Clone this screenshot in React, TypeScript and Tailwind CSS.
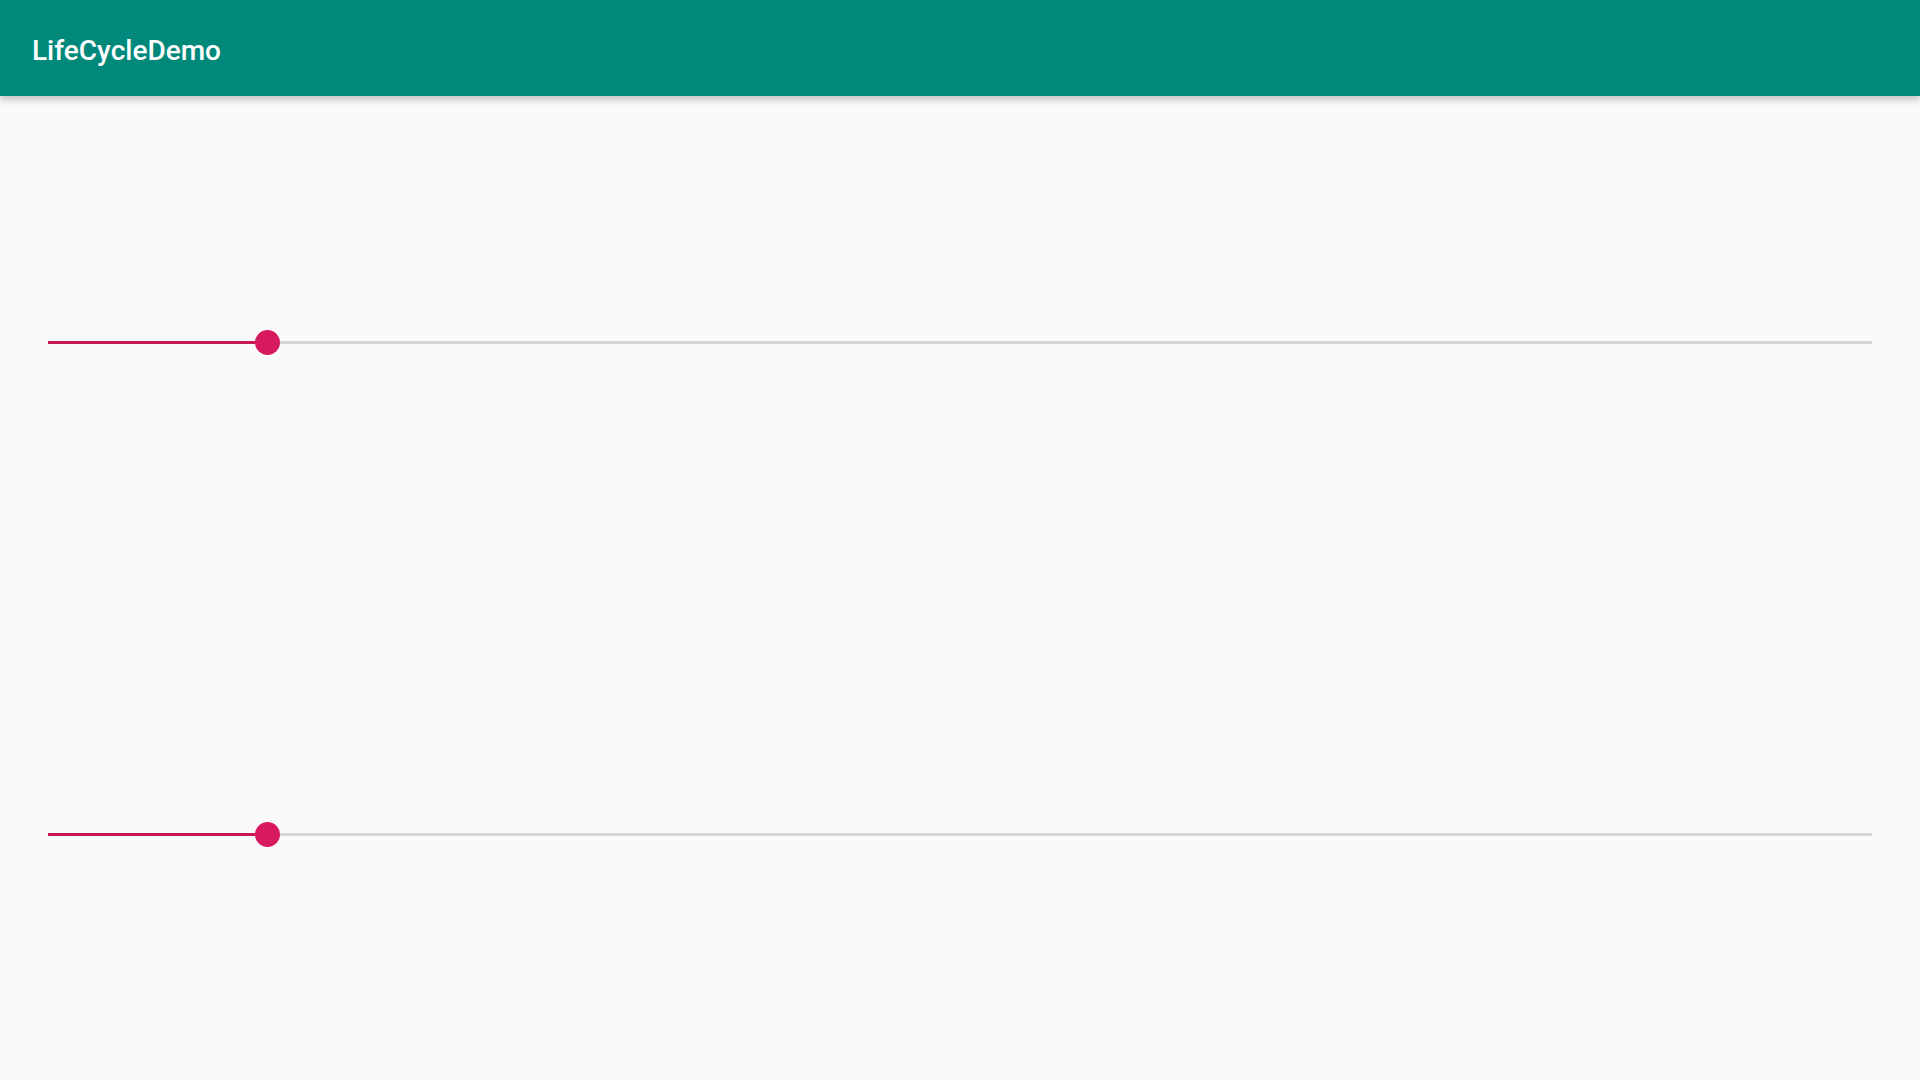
export default function App() {
  const Slider = () => (
    <div className="relative h-[25px] mx-[48px]">
      <div className="absolute left-0 right-0 top-[11px] h-[3px] bg-[#d6d6d6]" />
      <div className="absolute left-0 w-[219px] top-[11px] h-[3px] bg-[#c8185a]" />
      <div className="absolute left-[207px] top-0 w-[25px] h-[25px] rounded-full bg-[#d81b60]" />
    </div>
  );
  return (
    <div className="w-[1920px] h-[1080px] bg-[#fafafa] flex flex-col overflow-hidden" style={{ fontFamily: "Roboto, 'Noto Sans', sans-serif" }}>
      <header className="relative z-10 h-[96px] bg-[#00887a] flex items-center px-[32px] shadow-[0_3px_8px_rgba(0,0,0,0.25)]">
        <h1 className="text-white text-[28px] font-medium leading-none mt-[5px]">LifeCycleDemo</h1>
      </header>
      <div className="pt-[234px]">
        <Slider />
      </div>
      <div className="pt-[467px]">
        <Slider />
      </div>
    </div>
  );
}
